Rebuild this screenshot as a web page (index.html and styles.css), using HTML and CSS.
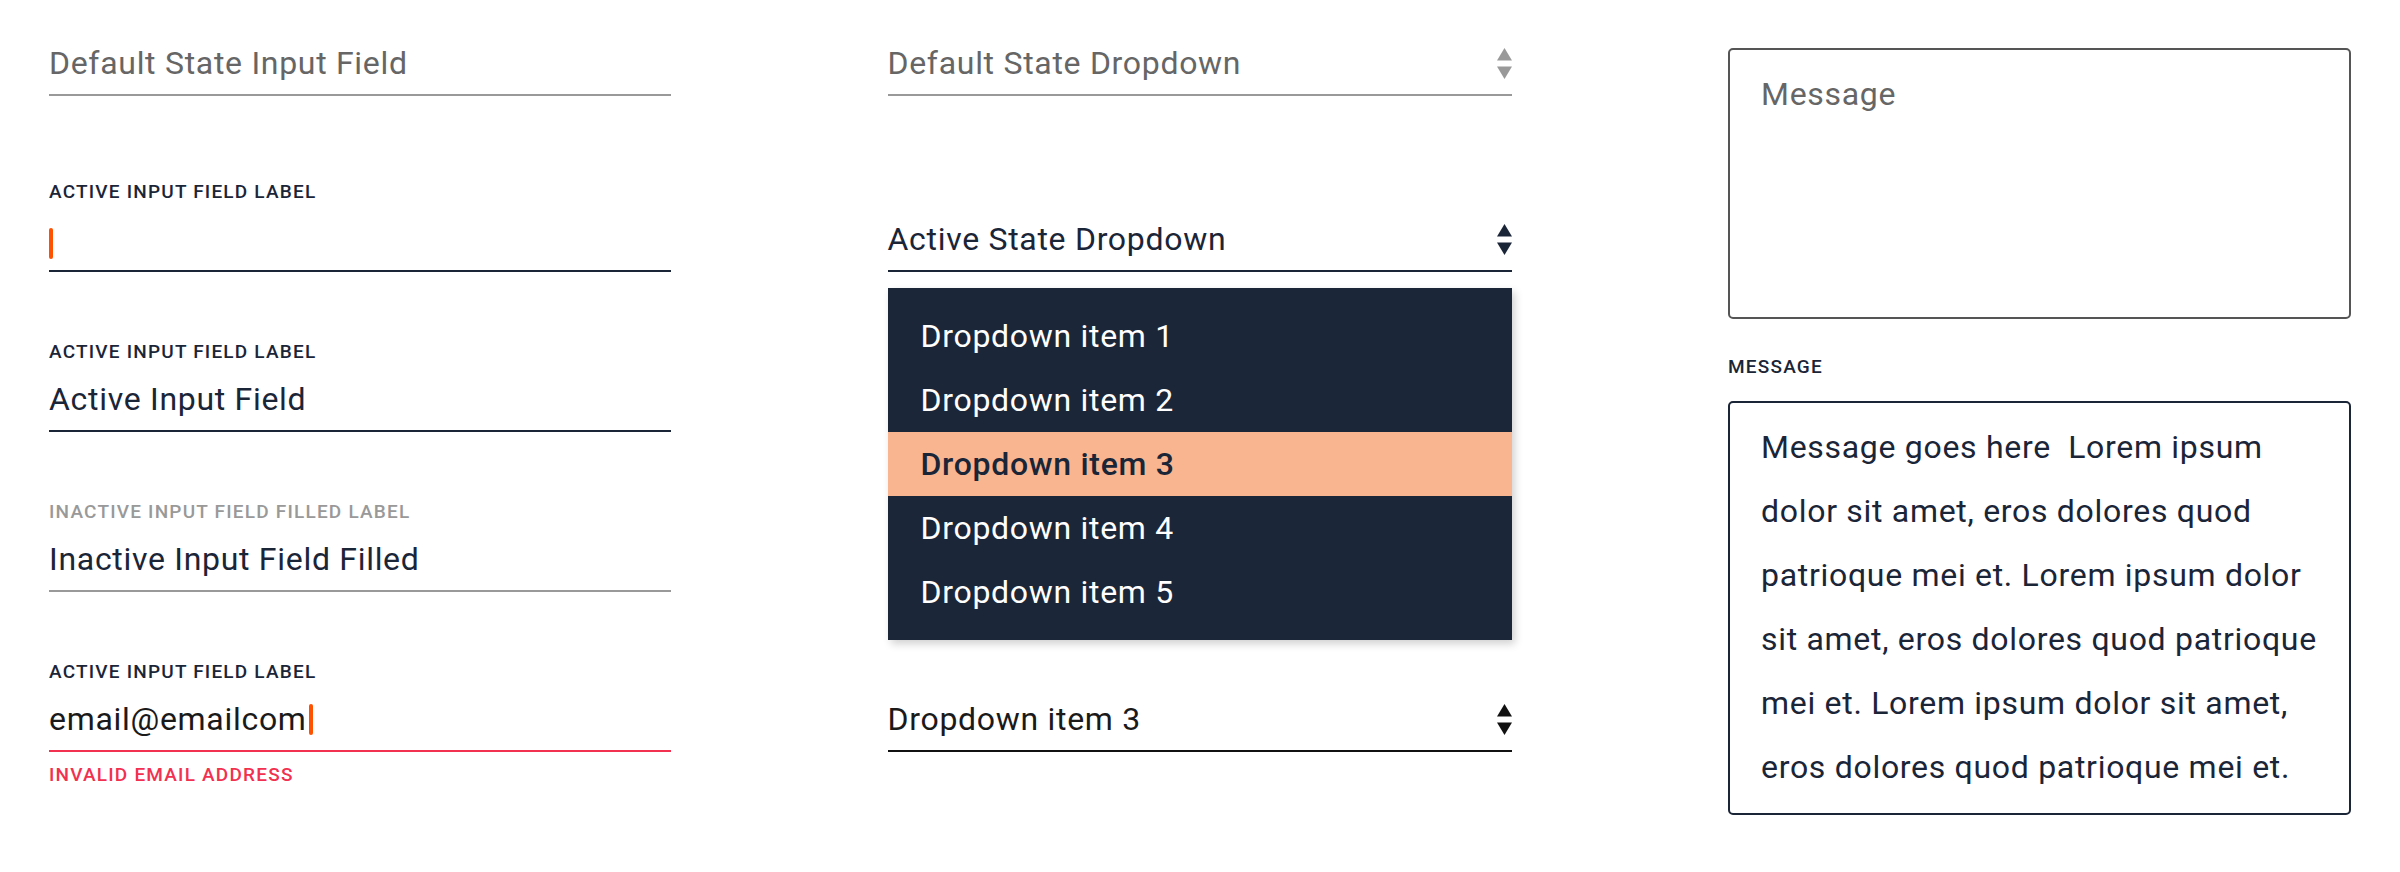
FILE: index.html
```html
<!DOCTYPE html>
<html lang="en">
<head>
<meta charset="utf-8">
<title>Form elements</title>
<link rel="stylesheet" href="styles.css">
</head>
<body>
<main class="board">
  <section class="col col-inputs">
    <div class="field field-first">
      <div class="control control-default">Default State Input Field</div>
    </div>
    <div class="field">
      <div class="label">ACTIVE INPUT FIELD LABEL</div>
      <div class="control control-active"><span class="caret caret-empty"></span></div>
    </div>
    <div class="field">
      <div class="label">ACTIVE INPUT FIELD LABEL</div>
      <div class="control control-active">Active Input Field</div>
    </div>
    <div class="field">
      <div class="label label-muted">INACTIVE INPUT FIELD FILLED LABEL</div>
      <div class="control control-filled">Inactive Input Field Filled</div>
    </div>
    <div class="field">
      <div class="label">ACTIVE INPUT FIELD LABEL</div>
      <div class="control control-error">email@emailcom<span class="caret caret-text"></span></div>
      <div class="error-text">INVALID EMAIL ADDRESS</div>
    </div>
  </section>

  <section class="col col-selects">
    <div class="control select select-default">
      <span class="select-value">Default State Dropdown</span>
      <svg class="arrows" width="15" height="31" viewBox="0 0 15 31"><polygon points="7.5,0 15,12.5 0,12.5"/><polygon points="0,18.5 15,18.5 7.5,31"/></svg>
    </div>
    <div class="control select select-active">
      <span class="select-value">Active State Dropdown</span>
      <svg class="arrows" width="15" height="31" viewBox="0 0 15 31"><polygon points="7.5,0 15,12.5 0,12.5"/><polygon points="0,18.5 15,18.5 7.5,31"/></svg>
    </div>
    <ul class="menu">
      <li class="menu-item">Dropdown item 1</li>
      <li class="menu-item">Dropdown item 2</li>
      <li class="menu-item menu-item-selected">Dropdown item 3</li>
      <li class="menu-item">Dropdown item 4</li>
      <li class="menu-item">Dropdown item 5</li>
    </ul>
    <div class="control select select-chosen">
      <span class="select-value">Dropdown item 3</span>
      <svg class="arrows" width="15" height="31" viewBox="0 0 15 31"><polygon points="7.5,0 15,12.5 0,12.5"/><polygon points="0,18.5 15,18.5 7.5,31"/></svg>
    </div>
  </section>

  <section class="col col-areas">
    <div class="textarea textarea-default">Message</div>
    <div class="label label-area">MESSAGE</div>
    <div class="textarea textarea-filled">Message goes here&nbsp; Lorem ipsum<br>dolor sit amet, eros dolores quod<br>patrioque mei et. Lorem ipsum dolor<br>sit amet, eros dolores quod patrioque<br>mei et. Lorem ipsum dolor sit amet,<br>eros dolores quod patrioque mei et.</div>
  </section>
</main>
</body>
</html>
```

FILE: styles.css
```css
* {
  box-sizing: border-box;
}

html,
body {
  margin: 0;
  background: #ffffff;
}

body {
  font-family: Roboto, "Liberation Sans", sans-serif;
  color: #1b2538;
}

.board {
  display: grid;
  grid-template-columns: 622px 624px 623px;
  column-gap: 216.5px;
  padding-left: 49px;
  align-items: start;
}

.col {
  display: flex;
  flex-direction: column;
}

/* ---------- inputs ---------- */
.col-inputs {
  padding-top: 43px;
}

.field {
  display: flex;
  flex-direction: column;
}

.field + .field {
  margin-top: 68px;
}

.field-first + .field {
  margin-top: 84px;
}

.label {
  font-size: 19px;
  line-height: 24px;
  font-weight: 500;
  letter-spacing: 1.2px;
  color: #1b2538;
  margin-bottom: 15px;
}

.label-muted {
  color: #999999;
}

.control {
  font-size: 32px;
  line-height: 40px;
  height: 53px;
  padding-bottom: 11px;
  letter-spacing: 0.7px;
  border-bottom: 2px solid #1b2538;
  white-space: nowrap;
}

.control-default {
  color: #666666;
  border-bottom-color: #999999;
}

.control-active {
  color: #1b2538;
}

.control-filled {
  color: #1b2538;
  border-bottom-color: #999999;
}

.control-error {
  color: #1a1a1a;
  border-bottom-color: #f2304f;
}

.caret {
  display: inline-block;
  width: 4px;
  height: 31px;
  border-radius: 2px;
  background: #ff5200;
}

.caret-empty {
  vertical-align: -9px;
}

.caret-text {
  margin-left: 2px;
  vertical-align: -5px;
}

.error-text {
  margin-top: 11px;
  font-size: 19px;
  line-height: 24px;
  font-weight: 500;
  letter-spacing: 1.2px;
  color: #f2304f;
}

/* ---------- selects ---------- */
.col-selects {
  padding-top: 43px;
}

.select {
  display: flex;
  justify-content: space-between;
}

.select .arrows {
  align-self: flex-start;
  margin-top: 5px;
  flex: none;
}

.select-default {
  color: #666666;
  border-bottom-color: #999999;
}

.select-default .arrows {
  fill: #999999;
}

.select-active {
  margin-top: 123px;
  color: #1b2538;
}

.select-active .arrows {
  fill: #1b2538;
}

.select-chosen {
  margin-top: 59px;
  color: #1a1a1a;
  border-bottom-color: #111111;
}

.select-chosen .arrows {
  fill: #111111;
}

.menu {
  list-style: none;
  margin: 16px 0 0;
  padding: 16px 0;
  background: #1c2639;
  box-shadow: 3px 4px 8px rgba(0, 0, 0, 0.18);
}

.menu-item {
  height: 64px;
  padding-left: 33px;
  font-size: 32px;
  line-height: 64px;
  letter-spacing: 0.7px;
  color: #ffffff;
}

.menu-item-selected {
  background: #f8b590;
  color: #1b2538;
  font-weight: 500;
}

/* ---------- textareas ---------- */
.col-areas {
  padding-top: 48px;
}

.textarea {
  border: 2px solid #555555;
  border-radius: 5px;
  padding: 12px 31px 0;
  font-size: 32px;
  line-height: 64px;
  letter-spacing: 0.7px;
}

.textarea-default {
  height: 271px;
  color: #666666;
}

.label-area {
  margin-top: 36px;
  margin-bottom: 22px;
}

.textarea-filled {
  height: 414px;
  border-color: #1b2538;
  color: #1b2538;
  white-space: nowrap;
}
```
